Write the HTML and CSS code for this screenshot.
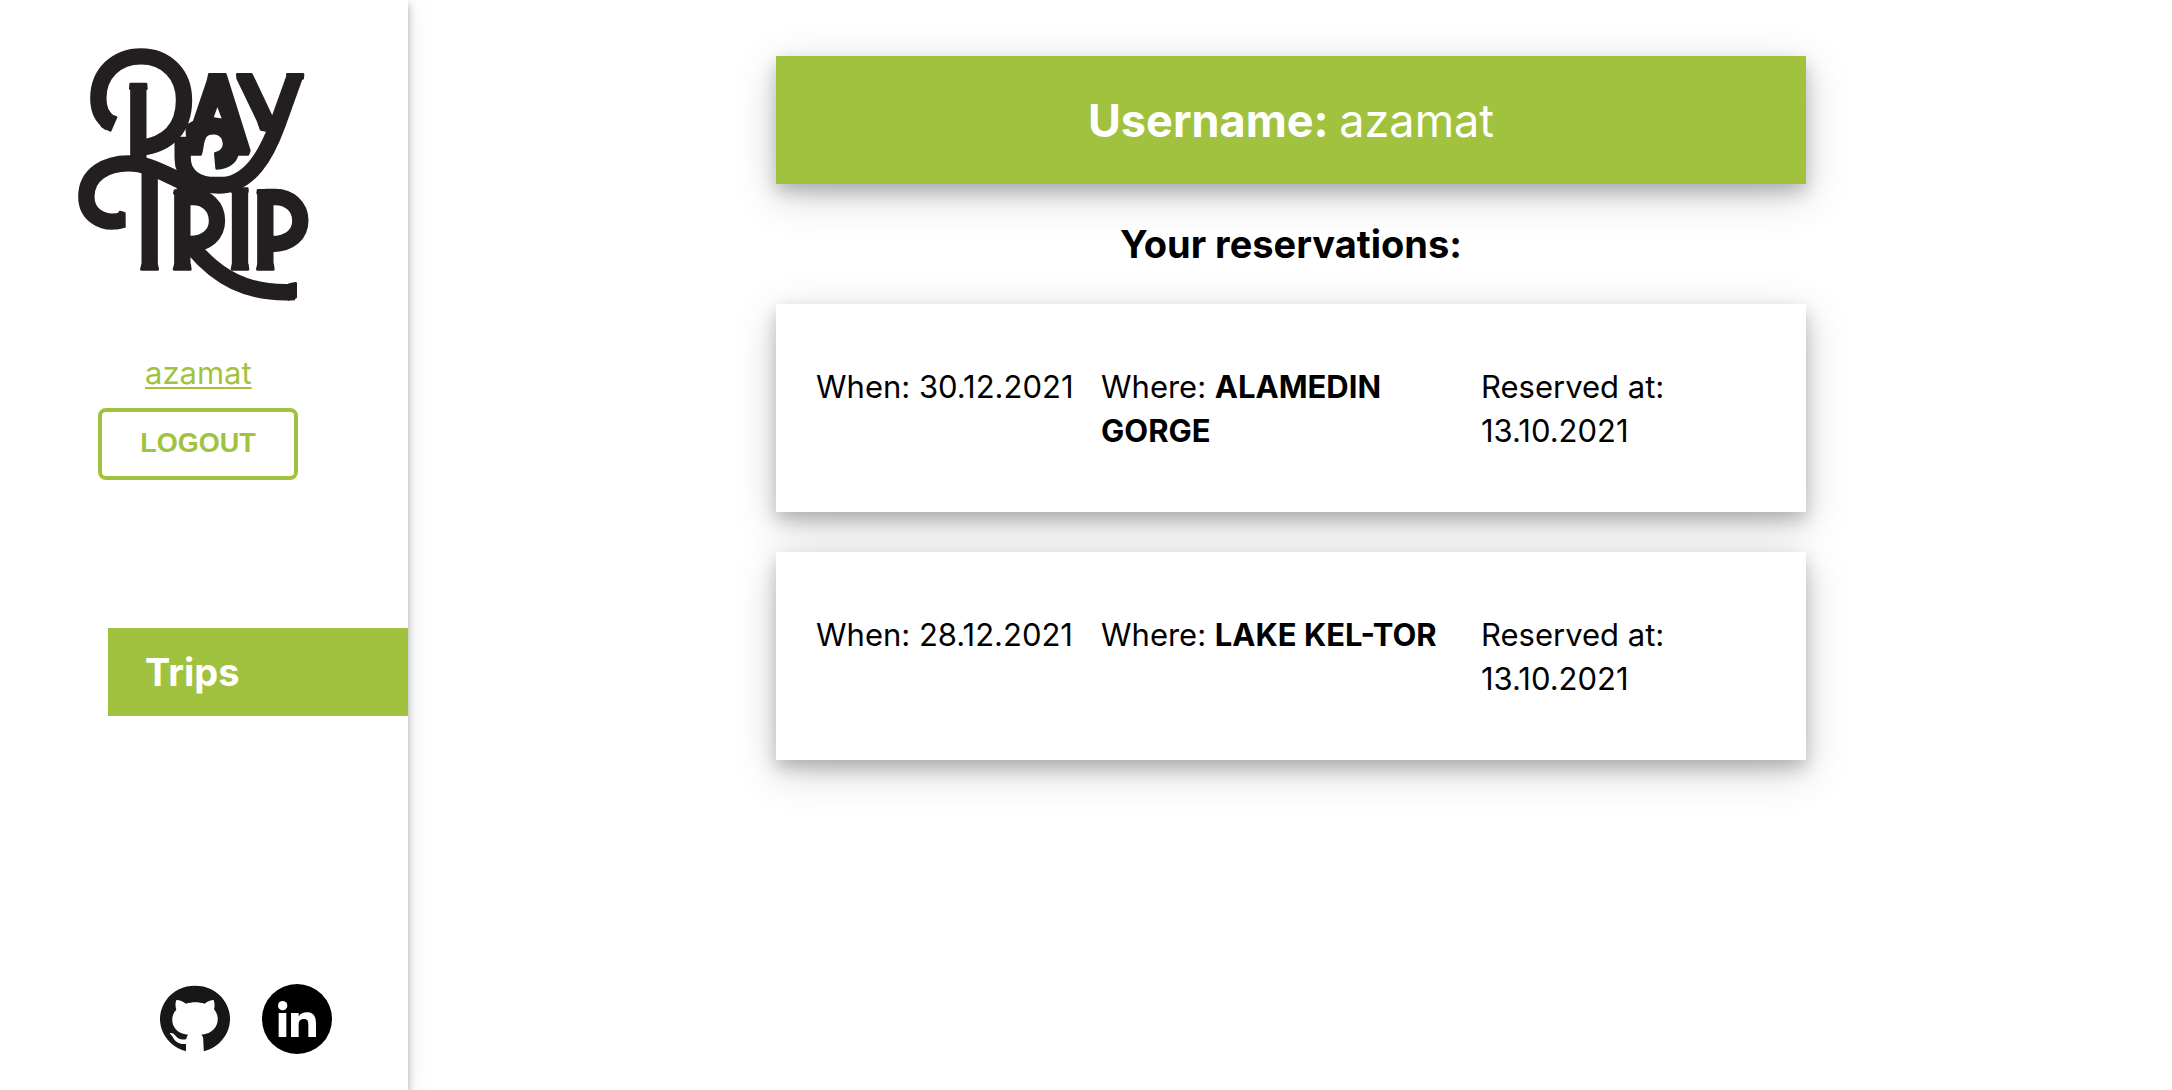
FILE: index.html
```html
<!DOCTYPE html>
<html lang="en">
<head>
<meta charset="utf-8">
<meta name="viewport" content="width=device-width, initial-scale=1">
<title>Day Trip</title>
<link rel="stylesheet" href="styles.css">
</head>
<body>
<div class="layout">
  <aside class="sidebar">
    <svg class="logo" viewBox="0 0 810 870" role="img" aria-label="Day Trip">
      <g fill="none" stroke="#231f20" stroke-width="49" stroke-linejoin="round">
        <path d="M152 282C124 259 115 238 115 205C115 130 170 79 243 79C320 79 372 135 372 210C372 290 330 343 240 354"/>
        <path d="M235 165V395"/>
        <path d="M704 140L652 285C620 372 570 466 475 467C402 467 368 430 368 385V320"/>
        <path d="M190 569C125 590 79 550 79 500C79 432 140 400 205 400C265 400 310 430 375 458"/>
        <path d="M269 410V712M367 486V712M540 480V712M616 486V712"/>
        <path d="M370 501H400C440 501 471 530 471 572C471 612 440 642 390 642"/>
        <path d="M396 650C470 740 560 794 704 786"/>
        <path d="M616 501H646C688 501 721 530 721 572C721 612 690 642 636 642"/>
      </g>
      <g fill="#231f20" stroke="#231f20" stroke-width="8" stroke-linejoin="round">
        <path d="M212 162H258L259 176H211ZM248 704H290L293 718H244ZM346 704H389L391 718H342ZM519 704H562L564 718H516ZM595 704H638L640 718H592ZM345 482H388V490H343ZM594 481H636V490H593ZM518 476H562V485H516Z"/>
        <path d="M143 254L168 262L151 301L126 288ZM180 546L193 550V588L172 594ZM688 764L707 760V802L686 808Z"/>
        <path d="M350 440H555L538 482H350Z" stroke="none"/>
        <path fill-rule="evenodd" d="M448 133H496L502 152L568 362L564 373H532C526 396 506 412 470 415L466 370C491 366 498 344 487 322C475 306 447 306 437 318C425 334 429 352 422 373H385L380 288L402 276L444 152ZM472 220L456 265L491 270Z"/>
        <path d="M532 133H574L580 145L638 268L622 302L603 298L594 272L533 145ZM682 133H729L728 145L690 160Z"/>
      </g>
    </svg>
    <a class="user-link" href="#">azamat</a>
    <button class="logout" type="button">LOGOUT</button>
    <nav class="nav"><a class="nav-link" href="#">Trips</a></nav>
    <div class="social">
      <a class="social-link" href="#" aria-label="GitHub">
        <svg viewBox="0 -6 210 210">
          <path fill="#181616" d="M76 195A105 100 0 1 1 134 195Z"/>
          <path fill="#fff" d="M49 42C60 42 69 47 78 53C96 47 116 47 134 53C143 46 152 42 161 42C165 53 164 64 162 70C184 94 175 142 124 146C129 150 130 156 130 166L132 210H78V174C55 176 44 164 40 156C36 148 31 146 29 141C42 139 47 151 55 157C62 161 70 162 79 159C80 152 82 149 84 146C34 142 26 94 49 71C45 60 46 50 49 42Z"/>
        </svg>
      </a>
      <a class="social-link" href="#" aria-label="LinkedIn">
        <svg viewBox="0 0 210 210">
          <circle cx="105" cy="105" r="105"/>
          <circle cx="62" cy="65" r="14" fill="#fff"/>
          <path fill="#fff" d="M50 87H73V159H50ZM87 87H110V97C116 88 124 85 134 85C155 85 162 98 162 120V159H139V124C139 113 138 105 126 105C114 105 110 112 110 123V159H87Z"/>
        </svg>
      </a>
    </div>
  </aside>
  <main class="main">
    <div class="content">
      <h1 class="banner">Username: <span class="banner-name">azamat</span></h1>
      <h2 class="heading">Your reservations:</h2>
      <ul class="list">
        <li class="card">
          <p>When: 30.12.2021</p>
          <p>Where: <strong>ALAMEDIN GORGE</strong></p>
          <p>Reserved at: 13.10.2021</p>
        </li>
        <li class="card">
          <p>When: 28.12.2021</p>
          <p>Where: <strong>LAKE KEL-TOR</strong></p>
          <p>Reserved at: 13.10.2021</p>
        </li>
      </ul>
    </div>
  </main>
</div>
</body>
</html>
```
FILE: styles.css
```css
* { box-sizing: border-box; }
body {
  margin: 0;
  background: #fff;
  color: #000;
  font-family: Inter, "Liberation Sans", sans-serif;
  font-size: 31px;
  line-height: 44px;
}
h1, h2, p, ul { margin: 0; padding: 0; }
.layout { display: flex; min-height: 100vh; }
.sidebar {
  flex: 0 0 408px;
  display: flex;
  flex-direction: column;
  padding: 30px 0 36px;
  background: #fff;
  box-shadow: 0 4px 8px rgba(0, 0, 0, .3), 0 4px 30px rgba(0, 0, 0, .08);
}
.logo { width: 270px; height: 290px; margin-left: 60px; }
.user-link {
  align-self: flex-start;
  margin: 31px 0 0 145px;
  color: #a1c23f;
  text-underline-offset: 3px;
  text-decoration-thickness: 2px;
}
.logout {
  width: 200px;
  height: 72px;
  margin: 13px 0 0 98px;
  padding: 0 0 2px;
  border: 4px solid #a1c23f;
  border-radius: 8px;
  background: #fff;
  color: #a1c23f;
  font: bold 27px "Liberation Sans", Arial, sans-serif;
}
.nav { margin: 148px 0 0 108px; }
.nav-link {
  display: block;
  padding: 22px 37px;
  background: #a1c23f;
  color: #fff;
  font-size: 38px;
  font-weight: 700;
  text-decoration: none;
}
.social { display: flex; gap: 32px; margin: auto 0 0 160px; }
.social-link { width: 70px; height: 70px; }
.social-link svg { display: block; width: 100%; }
.main { flex: 1; padding: 56px 38px 56px 40px; }
.content { max-width: 1030px; margin: 0 auto; }
.banner, .card {
  box-shadow: 0 8px 16px rgba(0, 0, 0, .2), 0 12px 40px rgba(0, 0, 0, .19);
}
.banner {
  padding: 37px 36px 35px;
  background: #a1c23f;
  color: #fff;
  font-size: 45px;
  line-height: 56px;
  text-align: center;
}
.banner-name { font-weight: 400; }
.heading { margin: 38px 0; font-size: 38px; text-align: center; }
.list { display: grid; gap: 40px; list-style: none; }
.card {
  display: grid;
  grid-template-columns: 3fr 4fr 3fr;
  padding: 61px 40px 59px;
  background: #fff;
}
```
